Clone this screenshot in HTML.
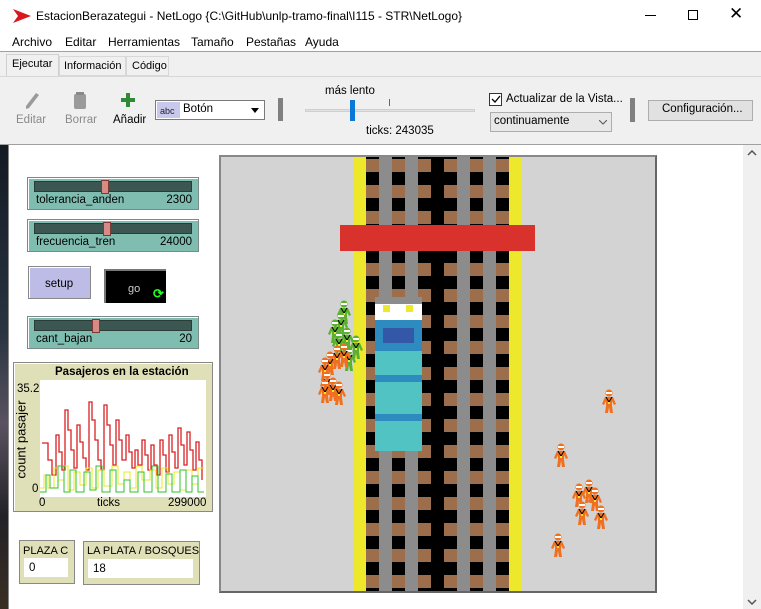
<!DOCTYPE html>
<html><head><meta charset="utf-8"><style>
*{margin:0;padding:0;box-sizing:border-box}
body{width:761px;height:609px;overflow:hidden;background:#f0f0f0;font-family:"Liberation Sans",sans-serif;font-size:11.5px;color:#000;position:relative}
.a{position:absolute;white-space:nowrap}
.sl{position:absolute;background:#7fbdb1;border:1px solid #7a8a86;box-shadow:inset 1px 1px 0 #fff}
.sl .tr{position:absolute;left:6px;top:3px;right:6px;height:11px;background:#3c5752;border:1px solid #2a3c38}
.sl .th{position:absolute;top:2px;width:8px;height:14px;background:#d88a85;border:1px solid #7a3a36}
.sl .l{position:absolute;left:8px;top:16px;font-size:11.5px}
.sl .v{position:absolute;right:6px;top:16px;font-size:11.5px}
.brn{background:repeating-linear-gradient(to bottom,#9c6e4b 0 13px,#000 13px 26px);background-position:0 2px}
</style></head><body>
<div class="a" style="left:0;top:0;width:761px;height:32px;background:#fff"></div>
<svg class="a" style="left:13px;top:9px" width="18" height="14"><path d="M0 0 L18 7 L0 14 L5 7Z" fill="#d8181c"/></svg>
<div class="a" style="left:36px;top:9px;font-size:12px">EstacionBerazategui - NetLogo {C:\GitHub\unlp-tramo-final\I115 - STR\NetLogo}</div>
<div class="a" style="left:645px;top:15px;width:11px;height:1px;background:#000"></div>
<div class="a" style="left:688px;top:10px;width:10px;height:10px;border:1px solid #000"></div>
<div class="a" style="left:729px;top:4px;font-size:17px">✕</div>
<div class="a" style="left:0;top:32px;width:761px;height:20px;background:#fff"></div>
<div class="a" style="left:12px;top:35px;font-size:12px">Archivo</div>
<div class="a" style="left:65px;top:35px;font-size:12px">Editar</div>
<div class="a" style="left:108px;top:35px;font-size:12px">Herramientas</div>
<div class="a" style="left:191px;top:35px;font-size:12px">Tamaño</div>
<div class="a" style="left:246px;top:35px;font-size:12px">Pestañas</div>
<div class="a" style="left:305px;top:35px;font-size:12px">Ayuda</div>
<div class="a" style="left:0;top:51px;width:761px;height:1px;background:#a0a0a0"></div>
<div class="a" style="left:6px;top:54px;width:53px;height:23px;background:#f0f0f0;border:1px solid #d0d0d0;border-bottom:none"></div>
<div class="a" style="left:12px;top:58px;font-size:11px">Ejecutar</div>
<div class="a" style="left:59px;top:56px;width:67px;height:20px;border:1px solid #d8d8d8;background:#f0f0f0"></div>
<div class="a" style="left:64px;top:60px;font-size:11px">Información</div>
<div class="a" style="left:126px;top:56px;width:43px;height:20px;border:1px solid #d8d8d8"></div>
<div class="a" style="left:132px;top:60px;font-size:11px">Código</div>
<div class="a" style="left:0;top:76px;width:761px;height:1px;background:#d8d8d8"></div>
<svg class="a" style="left:24px;top:92px" width="16" height="18"><path d="M12 1 L15 3 L5 16 L2 17 L2 14Z" fill="#9a9a9a"/></svg>
<div class="a" style="left:16px;top:114px;color:#8a8a8a">Editar</div>
<svg class="a" style="left:73px;top:92px" width="14" height="18"><rect x="1" y="2" width="12" height="15" rx="2" fill="#9a9a9a"/><rect x="3" y="0" width="8" height="3" fill="#888"/></svg>
<div class="a" style="left:65px;top:114px;color:#8a8a8a">Borrar</div>
<svg class="a" style="left:121px;top:93px" width="14" height="14"><rect x="5" y="0" width="4" height="14" fill="#2e8a35"/><rect x="0" y="5" width="14" height="4" fill="#2e8a35"/></svg>
<div class="a" style="left:113px;top:114px">Añadir</div>
<div class="a" style="left:155px;top:100px;width:110px;height:20px;background:#fff;border:1px solid #7a7a7a"></div>
<div class="a" style="left:157px;top:102px;width:23px;height:16px;background:#c8c8ec;font-size:9px;padding:4px 0 0 3px;color:#223">abc</div>
<div class="a" style="left:183px;top:103px">Botón</div>
<svg class="a" style="left:251px;top:108px" width="8" height="5"><path d="M0 0H8L4 5Z"/></svg>
<div class="a" style="left:278px;top:98px;width:5px;height:23px;background:#808080"></div>
<div class="a" style="left:325px;top:85px">más lento</div>
<div class="a" style="left:305px;top:109px;width:170px;height:3px;background:#e0e0e0;border:1px solid #d0d0d0"></div>
<div class="a" style="left:389px;top:99px;width:1px;height:7px;background:#666"></div>
<div class="a" style="left:350px;top:100px;width:5px;height:21px;background:#0a78d7"></div>
<div class="a" style="left:366px;top:125px">ticks: 243035</div>
<div class="a" style="left:489px;top:93px;width:13px;height:13px;border:1px solid #333;background:#fff"></div>
<svg class="a" style="left:491px;top:95px" width="10" height="9"><path d="M1 4 L4 7 L9 1" stroke="#000" stroke-width="1.3" fill="none"/></svg>
<div class="a" style="left:506px;top:93px">Actualizar de la Vista...</div>
<div class="a" style="left:490px;top:112px;width:122px;height:20px;border:1px solid #adadad;background:#e8e8e8"></div>
<div class="a" style="left:494px;top:115px">continuamente</div>
<svg class="a" style="left:599px;top:120px" width="8" height="5"><path d="M0 0L4 4L8 0" stroke="#555" fill="none"/></svg>
<div class="a" style="left:630px;top:98px;width:5px;height:24px;background:#808080"></div>
<div class="a" style="left:648px;top:100px;width:105px;height:21px;border:1px solid #adadad;background:#e1e1e1"></div>
<div class="a" style="left:662px;top:103px">Configuración...</div>
<div class="a" style="left:0;top:144px;width:761px;height:1px;background:#a0a0a0"></div>
<div class="a" style="left:0;top:145px;width:8px;height:464px;background:linear-gradient(#141a24,#283440 40%,#5a5260 60%,#222228 80%,#3a2e22)"></div>
<div class="a" style="left:8px;top:145px;width:735px;height:464px;background:#fff;border-left:1px solid #888"></div>
<div class="a" style="left:743px;top:145px;width:18px;height:464px;background:#f0f0f0"></div>
<svg class="a" style="left:747px;top:150px" width="10" height="6"><path d="M1 5L5 1L9 5" stroke="#555" stroke-width="1.5" fill="none"/></svg>
<svg class="a" style="left:747px;top:599px" width="10" height="6"><path d="M1 1L5 5L9 1" stroke="#555" stroke-width="1.5" fill="none"/></svg>
<div class="sl" style="left:27px;top:177px;width:172px;height:33px"><div class="tr"></div><div class="th" style="left:73px"></div><div class="l">tolerancia_anden</div><div class="v">2300</div></div>
<div class="sl" style="left:27px;top:219px;width:172px;height:33px"><div class="tr"></div><div class="th" style="left:75px"></div><div class="l">frecuencia_tren</div><div class="v">24000</div></div>
<div class="sl" style="left:27px;top:316px;width:172px;height:33px"><div class="tr"></div><div class="th" style="left:64px"></div><div class="l">cant_bajan</div><div class="v">20</div></div>
<div class="a" style="left:28px;top:266px;width:63px;height:33px;background:#bcbce6;border:1px solid #888;box-shadow:inset 1px 1px 0 #fff"></div>
<div class="a" style="left:45px;top:278px">setup</div>
<div class="a" style="left:104px;top:269px;width:62px;height:34px;background:#000;border-top:2px solid #777;border-left:2px solid #777"></div>
<div class="a" style="left:128px;top:283px;color:#ccc;font-size:11px">go</div>
<div class="a" style="left:153px;top:286px;color:#2f2;font-size:13px;font-weight:bold">⟳</div>
<div class="a" style="left:13px;top:362px;width:200px;height:150px;background:#e0e0b8;border:1px solid #888;box-shadow:inset 1px 1px 0 #fff"></div>
<div class="a" style="left:55px;top:366px;font-weight:bold;font-size:11.5px">Pasajeros en la estación</div>
<div class="a" style="left:40px;top:380px;width:166px;height:117px;background:#fff"></div>
<div class="a" style="left:17px;top:383px">35.2</div>
<div class="a" style="left:32px;top:483px">0</div>
<div class="a" style="left:-18px;top:432px;transform:rotate(-90deg);font-size:13px">count pasajer</div>
<div class="a" style="left:39px;top:497px">0</div>
<div class="a" style="left:97px;top:497px">ticks</div>
<div class="a" style="left:168px;top:497px">299000</div>
<svg class="a" style="left:40px;top:380px" width="166" height="117">
<polyline fill="none" stroke="#d82020" stroke-width="1.3" points="2,63 8,63 8,80 12,80 12,95 16,95 16,55 19,55 19,72 22,72 22,90 25,90 25,30 28,30 28,50 31,50 31,70 34,70 34,88 37,88 37,45 40,45 40,62 43,62 43,78 46,78 46,90 49,90 49,22 52,22 52,40 55,40 55,60 58,60 58,80 61,80 61,90 64,90 64,25 67,25 67,45 70,45 70,65 73,65 73,85 76,85 76,40 79,40 79,60 82,60 82,80 86,80 86,55 89,55 89,72 92,72 92,88 95,88 95,70 98,70 98,85 102,85 102,60 105,60 105,75 108,75 108,90 111,90 111,65 114,65 114,85 117,85 117,95 120,95 120,60 123,60 123,75 126,75 126,92 129,92 129,55 132,55 132,72 135,72 135,88 138,88 138,48 141,48 141,65 144,65 144,85 147,85 147,52 150,52 150,70 153,70 153,90 156,90 156,62 159,62 159,80 162,80 162,100"/>
<polyline fill="none" stroke="#e8e820" stroke-width="1" points="0,108 4,108 4,95 8,95 8,108 14,108 14,88 18,88 18,100 24,100 24,86 28,86 28,110 34,110 34,92 40,92 40,105 46,105 46,88 52,88 52,108 58,108 58,90 64,90 64,106 72,106 72,86 78,86 78,104 84,104 84,92 90,92 90,108 96,108 96,86 102,86 102,100 110,100 110,90 116,90 116,108 122,108 122,88 128,88 128,104 134,104 134,92 140,92 140,110 146,110 146,90 152,90 152,104 158,104 158,88 164,88"/>
<polyline fill="none" stroke="#30c030" stroke-width="1" points="0,112 6,112 6,95 10,95 10,108 18,108 18,86 24,86 24,112 30,112 30,90 36,90 36,112 44,112 44,92 50,92 50,110 56,110 56,86 62,86 62,112 70,112 70,90 76,90 76,112 84,112 84,100 90,100 90,112 98,112 98,92 104,92 104,112 112,112 112,86 118,86 118,112 126,112 126,94 132,94 132,112 140,112 140,90 146,90 146,112 152,112 152,96 158,96 158,112 164,112"/>
</svg>
<div class="a" style="left:19px;top:540px;width:56px;height:44px;background:#e0e0b8;border:1px solid #888"></div>
<div class="a" style="left:23px;top:545px;font-size:11px">PLAZA C</div>
<div class="a" style="left:24px;top:558px;width:44px;height:19px;background:#fff"></div>
<div class="a" style="left:29px;top:562px">0</div>
<div class="a" style="left:83px;top:541px;width:117px;height:44px;background:#e0e0b8;border:1px solid #888"></div>
<div class="a" style="left:87px;top:545px;font-size:11px">LA PLATA / BOSQUES</div>
<div class="a" style="left:88px;top:559px;width:105px;height:19px;background:#fff"></div>
<div class="a" style="left:93px;top:563px">18</div>
<div class="a" style="left:219px;top:155px;width:438px;height:438px;border:2px solid #888;border-right-color:#666;border-bottom-color:#666;background:#d3d3d3;overflow:hidden">
<div class="a" style="left:132px;top:0;width:13px;height:434px;background:#ede82c"></div>
<div class="a" style="left:288px;top:0;width:13px;height:434px;background:#ede82c"></div>
<div class="a brn" style="left:145px;top:0;width:143px;height:434px"></div>
<div class="a" style="left:158px;top:0;width:13px;height:434px;background:#8c8c8c"></div>
<div class="a" style="left:184px;top:0;width:13px;height:434px;background:#8c8c8c"></div>
<div class="a" style="left:210px;top:0;width:13px;height:434px;background:#000"></div>
<div class="a" style="left:236px;top:0;width:13px;height:434px;background:#8c8c8c"></div>
<div class="a" style="left:262px;top:0;width:13px;height:434px;background:#8c8c8c"></div>
<div class="a" style="left:119px;top:68px;width:195px;height:26px;background:#d9322d"></div>
<div class="a" style="left:154px;top:140px;width:47px;height:7px;background:#8c8c8c"></div>
<div class="a" style="left:154px;top:147px;width:47px;height:16px;background:#fff"></div>
<div class="a" style="left:162px;top:148px;width:7px;height:7px;background:#ede82c"></div>
<div class="a" style="left:185px;top:148px;width:7px;height:7px;background:#ede82c"></div>
<div class="a" style="left:154px;top:163px;width:47px;height:131px;background:#52c3c3"></div>
<div class="a" style="left:154px;top:163px;width:47px;height:31px;background:#2e8bc0"></div>
<div class="a" style="left:162px;top:171px;width:31px;height:15px;background:#3458a8"></div>
<div class="a" style="left:154px;top:218px;width:47px;height:7px;background:#2e8bc0"></div>
<div class="a" style="left:154px;top:257px;width:47px;height:7px;background:#2e8bc0"></div>
<svg class="a" style="left:0;top:0" width="434" height="434">
<defs>
<g id="po"><circle cx="8" cy="4" r="3.5" fill="#f07020"/><rect x="5" y="3" width="6" height="2" fill="#fff"/><path d="M4 8 H12 L15 15 L13 16 L11 12 V17 L12 24 H9 L8 18 L7 24 H4 L5 17 V12 L3 16 L1 15Z" fill="#f07020"/><path d="M5 8 L8 13 L11 8" stroke="#000" fill="none"/><rect x="7" y="13" width="2" height="2" fill="#ede82c"/></g>
<g id="pg"><circle cx="8" cy="4" r="3.5" fill="#5cb030"/><rect x="5" y="3" width="6" height="2" fill="#fff"/><path d="M4 8 H12 L15 15 L13 16 L11 12 V17 L12 24 H9 L8 18 L7 24 H4 L5 17 V12 L3 16 L1 15Z" fill="#5cb030"/><path d="M5 8 L8 13 L11 8" stroke="#000" fill="none"/><rect x="7" y="13" width="2" height="2" fill="#ede82c"/></g>
</defs>
<use href="#pg" x="115" y="143"/><use href="#pg" x="112" y="155"/><use href="#pg" x="106" y="162"/><use href="#pg" x="118" y="170"/><use href="#pg" x="110" y="174"/><use href="#pg" x="127" y="178"/><use href="#pg" x="120" y="190"/>
<use href="#po" x="115" y="186"/><use href="#po" x="108" y="188"/><use href="#po" x="101" y="194"/><use href="#po" x="96" y="200"/><use href="#po" x="98" y="214"/><use href="#po" x="104" y="220"/><use href="#po" x="110" y="224"/><use href="#po" x="96" y="222"/>
<use href="#po" x="380" y="232"/><use href="#po" x="332" y="286"/><use href="#po" x="350" y="326"/><use href="#po" x="360" y="322"/><use href="#po" x="366" y="330"/><use href="#po" x="353" y="344"/><use href="#po" x="372" y="348"/><use href="#po" x="329" y="376"/>
</svg>
</div>
</body></html>
